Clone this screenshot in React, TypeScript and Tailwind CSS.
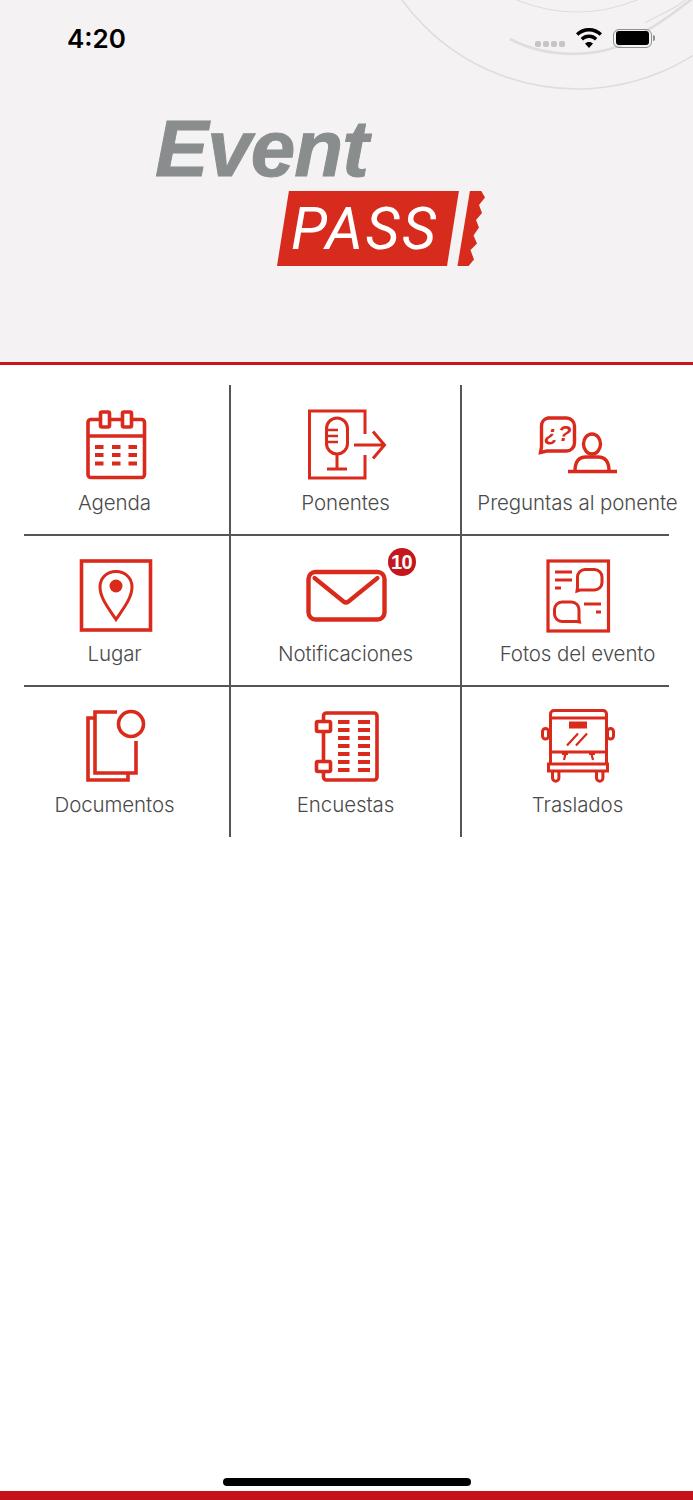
import type { ReactNode } from "react";

const RED = "#d92a1c";

function Icon({ box, children }: { box: string; children: ReactNode }) {
  return (
    <svg
      viewBox={box}
      width={100}
      height={80}
      fill="none"
      stroke={RED}
      strokeWidth={3.6}
      className="block"
    >
      {children}
    </svg>
  );
}

function AgendaIcon() {
  return (
    <Icon box="65 405 100 80">
      <rect x="88" y="419.500" width="56.500" height="58" rx="3" />
      <path d="M88 436h56.500" />
      <rect x="100.500" y="412" width="9" height="15" rx="1.500" fill="#fff" />
      <rect x="122.500" y="412" width="9" height="15" rx="1.500" fill="#fff" />
      <path
        d="M95 447h8.500M112 447h8.500M128.500 447h8.500M95 455h8.500M112 455h8.500M128.500 455h8.500M95 463.500h8.500M112 463.500h8.500M128.500 463.500h8.500"
        strokeWidth={4}
      />
    </Icon>
  );
}

function PonentesIcon() {
  return (
    <Icon box="296 405 100 80">
      <path d="M365 434v-23h-55.500v67H365v-23" strokeWidth={3} />
      <rect x="326.500" y="418" width="21" height="36" rx="10.500" strokeWidth={3} />
      <path d="M327 430h11M327 436h11M327 442h11" strokeWidth={2.6} />
      <path d="M337 454v15M327 469h20" strokeWidth={3} />
      <path d="M354 445h30M373 431.500l11.500 13.500-11.500 13.500" strokeWidth={3} />
    </Icon>
  );
}

function PreguntasIcon() {
  return (
    <Icon box="528 405 100 80">
      <path d="M548 418h18.500a8 8 0 0 1 8 8v17a8 8 0 0 1-8 8H547l-6.500 1.500 1-5.500v-21a8 8 0 0 1 6.500-8Z" strokeWidth={3.4} />
      <text
        x="558"
        y="441"
        textAnchor="middle"
        fontFamily="'Liberation Sans', sans-serif"
        fontWeight={700}
        fontStyle="italic"
        fontSize="22"
        fill={RED}
        stroke="none"
      >
        ¿?
      </text>
      <ellipse cx="592" cy="444" rx="8.500" ry="10" strokeWidth={3.4} />
      <path d="M575 471c0-9 3-14 11-14h12c8 0 11 5 11 14" strokeWidth={3.4} />
      <path d="M568 471.500h49" strokeWidth={3.4} />
    </Icon>
  );
}

function LugarIcon() {
  return (
    <Icon box="65 556 100 80">
      <rect x="81.500" y="561" width="69" height="69" />
      <path d="M116 571.500c-9.500 0-16 7-16 15.500 0 11 9 22 16 32.500 7-10.500 16-21.500 16-32.500 0-8.500-6.500-15.500-16-15.500Z" strokeWidth={3} />
      <circle cx="116" cy="586" r="6.500" fill={RED} stroke="none" />
    </Icon>
  );
}

function MailIcon() {
  return (
    <Icon box="296 556 100 80">
      <rect x="308.500" y="572" width="76" height="47.500" rx="7" strokeWidth={4.4} />
      <path d="m314.500 578 29 23.500q2.500 2 5 0l29-23.500" strokeWidth={4.2} strokeLinecap="round" />
    </Icon>
  );
}

function FotosIcon() {
  return (
    <Icon box="528 556 100 80">
      <rect x="548" y="561" width="60.500" height="70" strokeWidth={3.2} />
      <path d="M555 572h17M555 580h17M555 588h6M584 604h17M596 612h5" strokeWidth={3} />
      <path d="M585 569.500h9.500a7.500 7.500 0 0 1 7.500 7.500v5.500a7.500 7.500 0 0 1-7.500 7.500H580l-3 1 .5-3.500v-10.500a7.500 7.500 0 0 1 7.500-7.500Z" strokeWidth={3} />
      <path d="M562 602h9.500a7.500 7.500 0 0 1 7.500 7.500v10l.5 2.500-3-.5H562a7.500 7.500 0 0 1-7.500-7.500v-4.500a7.500 7.500 0 0 1 7.500-7.500Z" strokeWidth={3} />
    </Icon>
  );
}

function DocumentosIcon() {
  return (
    <Icon box="65 707 100 80">
      <path d="M117 712H95v61h41v-32" />
      <path d="M95 718h-7v62h40v-7" />
      <circle cx="131" cy="724" r="12.500" />
    </Icon>
  );
}

function EncuestasIcon() {
  return (
    <Icon box="296 707 100 80">
      <path d="M323.500 720v-4a3 3 0 0 1 3-3h47.500a3 3 0 0 1 3 3v61a3 3 0 0 1-3 3h-47.500a3 3 0 0 1-3-3v-5M323.500 732v29" />
      <rect x="316.500" y="721.500" width="14" height="10" rx="1.500" />
      <rect x="316.500" y="761.500" width="14" height="10" rx="1.500" />
      <path
        d="M338 722h11.500M358 722h12M338 730h11.500M358 730h12M338 738h11.500M358 738h12M338 746h11.500M358 746h12M338 754h11.500M358 754h12M338 762h11.500M358 762h12M338 770h11.500M358 770h12"
        strokeWidth={4}
      />
    </Icon>
  );
}

function TrasladosIcon() {
  return (
    <Icon box="528 707 100 80">
      <g strokeWidth={3}>
        <path d="M550.500 764v-50a3.500 3.500 0 0 1 3.500-3.500h49a3.500 3.500 0 0 1 3.500 3.500v50" />
        <path d="M550.500 718h56M550.500 752h56" />
        <rect x="548.500" y="764" width="59" height="7" />
        <rect x="542.500" y="728.500" width="6" height="10.500" rx="3" />
        <rect x="607.500" y="728.500" width="6" height="10.500" rx="3" />
        <path d="M578 733.500 567 745.500M587 733.500 576 745.500" strokeWidth={2.2} />
        <path d="M552.500 771v7a3.200 3.200 0 0 0 6.400 0v-7M596.500 771v7a3.200 3.200 0 0 0 6.400 0v-7" />
        <path d="M562 754h6M565.500 754l-1.500 6M589 754h6M591.500 754l1.500 6" strokeWidth={2.2} />
      </g>
      <rect x="569" y="721.500" width="18" height="7" fill={RED} stroke="none" />
    </Icon>
  );
}

type Item = { label: string; icon: ReactNode; badge?: string };

const rows: Item[][] = [
  [
    { label: "Agenda", icon: <AgendaIcon /> },
    { label: "Ponentes", icon: <PonentesIcon /> },
    { label: "Preguntas al ponente", icon: <PreguntasIcon /> },
  ],
  [
    { label: "Lugar", icon: <LugarIcon /> },
    { label: "Notificaciones", icon: <MailIcon />, badge: "10" },
    { label: "Fotos del evento", icon: <FotosIcon /> },
  ],
  [
    { label: "Documentos", icon: <DocumentosIcon /> },
    { label: "Encuestas", icon: <EncuestasIcon /> },
    { label: "Traslados", icon: <TrasladosIcon /> },
  ],
];

function Cell({ item, last }: { item: Item; last: boolean }) {
  return (
    <div
      className={`flex h-full flex-col items-center pt-[20.5px] ${
        last ? "" : "border-r-[2px] border-[#555555]"
      }`}
    >
      <div className="relative">
        {item.icon}
        {item.badge ? (
          <span className="absolute left-[92px] top-[-8px] flex h-[28px] w-[28px] items-center justify-center rounded-full bg-[#c4161c] font-['Liberation_Sans'] text-[20px] font-bold tracking-[-0.5px] text-white">
            {item.badge}
          </span>
        ) : null}
      </div>
      <span className="mt-[4.5px] whitespace-nowrap font-['Inter'] text-[20.5px] font-light leading-[26px] tracking-[-0.1px] text-[#4a4a4a]">
        {item.label}
      </span>
    </div>
  );
}

function StatusBar() {
  return (
    <div className="relative flex h-[76px] items-center justify-between pl-[67px] pr-[38px]">
      <span className="font-['Inter'] text-[26px] font-semibold text-black">
        4:20
      </span>
      <div className="flex items-center">
        <div className="mr-[10px] mt-[12px] flex gap-[2px]">
          <span className="h-[6px] w-[6px] rounded-[2px] bg-[#c6c5c5]" />
          <span className="h-[6px] w-[6px] rounded-[2px] bg-[#c6c5c5]" />
          <span className="h-[6px] w-[6px] rounded-[2px] bg-[#c6c5c5]" />
          <span className="h-[6px] w-[6px] rounded-[2px] bg-[#c6c5c5]" />
        </div>
        <svg viewBox="0 0 28 20" width={28} height={20} fill="#000" className="mr-[10px]">
          <path d="M14 0C9 0 4.500 1.900 1 5.200l2.300 2.600C6.100 5.100 9.900 3.500 14 3.500s7.900 1.600 10.700 4.300L27 5.200C23.500 1.900 19 0 14 0Z" />
          <path d="M14 6.600c-3.200 0-6.100 1.200-8.300 3.300L8 12.500c1.600-1.500 3.700-2.400 6-2.400s4.400.9 6 2.400l2.300-2.600c-2.200-2.100-5.100-3.300-8.300-3.300Z" />
          <path d="m14 20-4-4.400c1-1 2.500-1.700 4-1.700s3 .7 4 1.700L14 20Z" />
        </svg>
        <div className="flex h-[19px] w-[39px] items-center justify-center rounded-[6px] border-[1.5px] border-[#8f8f8f]">
          <span className="h-[14px] w-[33px] rounded-[3px] bg-black" />
        </div>
        <span className="ml-[1px] h-[6px] w-[2px] rounded-r-[2px] bg-[#8f8f8f]" />
      </div>
    </div>
  );
}

function Logo() {
  return (
    <div className="ml-[155px] mt-[33px] flex flex-col items-start">
      <span className="font-['Liberation_Sans'] text-[80px] font-bold italic leading-[80px] tracking-[-1px] text-[#8a8d8e] [-webkit-text-stroke:1px_#8a8d8e]">
        Event
      </span>
      <div className="relative ml-[122px] mt-[2px] flex h-[75px] w-[208px] items-center pl-[14px]">
        <svg viewBox="277 192 208 75" width={208} height={75} className="absolute inset-0" fill="#d72b1d">
          <path d="M289 191.500h170l-12 75.500H277Z" />
          <path d="M470 191.500h11l4 7-6 7.500 3 8-6 7 3 7.500-5.500 8 3.500 8-6.500 6.500 3.500 9.500-5.500 6.500h-11Z" />
        </svg>
        <span className="relative font-['Roboto'] text-[59px] font-normal italic leading-[75px] tracking-[2.5px] text-white">
          PASS
        </span>
      </div>
    </div>
  );
}

export default function App() {
  return (
    <div className="flex h-[1500px] w-full flex-col bg-white">
      <header className="relative h-[364.5px] overflow-hidden border-b-[3.5px] border-[#c4161c] bg-[#f4f2f3]">
        <svg
          viewBox="0 0 693 361"
          width={693}
          height={361}
          fill="none"
          stroke="#dfdddd"
          className="absolute left-0 top-0"
        >
          <circle cx="577" cy="-127.500" r="216.500" strokeWidth={1.6} />
          <circle cx="577" cy="-144" r="156" strokeWidth={1.2} />
          <path d="M510 39c40 21 98 20 130-5 20-10 38-24 53-36" strokeWidth={2.6} />
          <path d="M645 23c18-10 35-16 48-30" strokeWidth={1.2} />
        </svg>
        <div className="relative">
          <StatusBar />
          <Logo />
        </div>
      </header>

      <main className="flex-1 pt-[20px]">
        {rows.map((row, r) => (
          <div
            key={row[0].label}
            className={`mx-6 ${
              r < rows.length - 1
                ? "h-[151px] border-b-[2px] border-[#555555]"
                : "h-[150px]"
            }`}
          >
            <div className="-mx-6 grid h-full grid-cols-[231px_231px_231px]">
              {row.map((item, i) => (
                <Cell key={item.label} item={item} last={i === 2} />
              ))}
            </div>
          </div>
        ))}
      </main>

      <div className="flex justify-center pb-[5px]">
        <span className="h-[8px] w-[248px] rounded-full bg-black" />
      </div>
      <div className="h-[9px] bg-[#c4121a]" />
    </div>
  );
}
